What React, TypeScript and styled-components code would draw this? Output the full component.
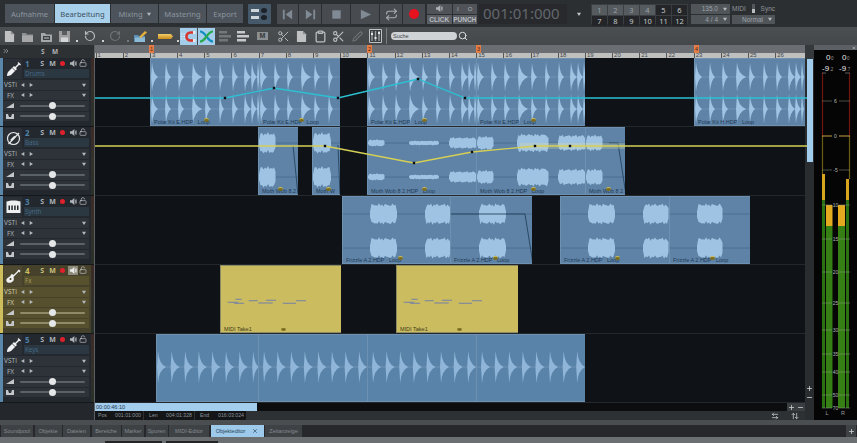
import styled, { createGlobalStyle } from "styled-components";
import {
  RotateCcw,
  RotateCw,
  Scissors,
  Clipboard,
  Pen,
  Search,
  Repeat,
  LockOpen,
  Plus,
  Minus,
  X,
  ChevronsRight,
  ArrowLeftRight,
  ArrowUpDown,
} from "lucide-react";

const GlobalStyle = createGlobalStyle`
  html, body { margin: 0; padding: 0; background: #2b2e31; }
  body { font-family: "Noto Sans", "Liberation Sans", sans-serif; }
`;

const small = `"Liberation Sans", Arial, sans-serif`;

/* ---------- data ---------- */

type Part = { x: number; w: number; label: string; icon?: number };
type Block = [number, number, number];

const polar = "Polar Kit E.HDP   Loop";
const wob = "Moth Wob 8 2.HDP   Loop";
const friz = "Frizzle A 2.HDP   Loop";

const drumParts: Part[] = [
  { x: 150, w: 109, label: polar, icon: 53 },
  { x: 259, w: 81, label: polar, icon: 39 },
  { x: 367, w: 109, label: polar, icon: 54 },
  { x: 476, w: 109, label: polar, icon: 54 },
  { x: 694, w: 111, label: "Polar Kit H.HDP   Loop" },
];

const wobParts: Part[] = [
  { x: 258, w: 40, label: "Moth Wob 8.2", icon: 19 },
  { x: 312, w: 28, label: "Moth W", icon: 13 },
  { x: 367, w: 109, label: wob, icon: 54 },
  { x: 476, w: 109, label: wob, icon: 54 },
  { x: 585, w: 40, label: "Moth Wob 8 2.", icon: 20 },
];
const wobBlocks: Block[] = [
  [258, 275, 9],
  [312, 330, 9],
  [367, 384, 3],
  [408, 438, 2],
  [448, 476, 5],
  [476, 493, 6],
  [516, 548, 8],
  [557, 585, 7],
  [585, 602, 7],
];

const frizParts: Part[] = [
  { x: 342, w: 108, label: friz, icon: 55 },
  { x: 450, w: 82, label: friz, icon: 42 },
  { x: 560, w: 109, label: friz, icon: 54 },
  { x: 669, w: 81, label: friz, icon: 40 },
];
const frizBlocks: Block[] = [
  [369, 396, 9],
  [424, 450, 9],
  [478, 505, 9],
  [587, 614, 9],
  [642, 668, 9],
  [696, 722, 9],
];

const midiParts: Part[] = [
  { x: 220, w: 121, label: "MIDI Take1", icon: 60 },
  { x: 396, w: 122, label: "MIDI Take1", icon: 60 },
];
const midiNotes = [
  [6.7, 17.3, 36.3],
  [13, 23, 37.3],
  [14.3, 20.7, 33.3],
  [27.7, 36.7, 34.7],
  [37.3, 51.7, 37],
  [45, 55, 34.3],
  [61.7, 75, 37.3],
  [75, 85, 34.7],
];

const keyParts: Part[] = [
  { x: 156, w: 102, label: "" },
  { x: 258, w: 109, label: "" },
  { x: 367, w: 109, label: "" },
  { x: 476, w: 109, label: "" },
];

const drumHits: [number, number, number][] = [
  [0, 7, 15],
  [14, 6, 15],
  [27, 6, 15],
  [41, 10, 15],
  [54, 6, 14],
  [68, 5, 15],
  [81, 6, 15],
  [93, 7, 15],
  [100, 6, 15],
  [106, 3, 15],
];

/* ---------- waveform paths ---------- */

const drumPath = (w: number, cy: number) =>
  drumHits
    .filter((h) => h[0] < w)
    .map(([o, len, a]) => {
      const end = Math.min(o + len, w);
      return `M${o} ${cy}L${o + 1} ${cy - a}Q${o + 1.8} ${cy - a * 0.22} ${end} ${cy}Q${o + 1.8} ${cy + a * 0.22} ${o + 1} ${cy + a}Z`;
    })
    .join("");

const keysPath = (w: number, cy: number, start: number) => {
  let d = "";
  for (let o = start; o < w; o += 13.6) {
    const end = Math.min(o + 9, w);
    d += `M${o} ${cy}L${o + 1} ${cy - 16}Q${o + 2} ${cy - 3} ${end} ${cy}Q${o + 2} ${cy + 3} ${o + 1} ${cy + 16}Z`;
  }
  return d;
};

const blockPath = (x0: number, x1: number, cy: number, a: number) => {
  const top: string[] = [];
  const bot: string[] = [];
  for (let x = x0; x <= x1; x += 1.5) {
    const t = Math.min(1, (x - x0) / 2 + 0.3, (x1 - x) / 2 + 0.3);
    const n = 1 + 0.13 * Math.sin(x * 2.3) + 0.09 * Math.sin(x * 5.1);
    top.push(`${x} ${cy - a * t * n}`);
    bot.unshift(`${x} ${cy + a * t * (2 - n)}`);
  }
  return `M${top.join("L")}L${bot.join("L")}Z`;
};

/* ---------- icons ---------- */

const DocIcon = () => (
  <svg width="11" height="13" viewBox="0 0 12 14">
    <path d="M1 1h6.5L11 4.500V13H1z" fill="#bfc1c2" />
    <path d="M7.500 1v3.500H11" fill="#8d9093" />
  </svg>
);
const FolderIcon = () => (
  <svg width="13" height="13" viewBox="0 0 13 13">
    <path d="M1 3h4l1 1.500h6V12H1z" fill="#8c8f92" />
    <path d="M1 5.500h11V12H1z" fill="#a5a7a9" />
  </svg>
);
const FolderBox = () => (
  <svg width="13" height="13" viewBox="0 0 13 13">
    <path d="M1 3h4l1 1.500h6V12H1z" fill="#a5a8aa" />
    <path d="M3 6h7v4H3z" fill="#3b3e41" />
    <path d="M4 7.500h5v1H4z" fill="#c9cbcc" />
  </svg>
);
const SaveIcon = () => (
  <svg width="13" height="13" viewBox="0 0 13 13">
    <path d="M1 1h11v11H1z" fill="#9c9ea0" />
    <path d="M4 1h5v4H4z" fill="#5a5d60" />
    <path d="M3 7.500h7V12H3z" fill="#d4d5d6" />
  </svg>
);
const FolderPen = () => (
  <svg width="15" height="13" viewBox="0 0 15 13">
    <path d="M1 5h4l1 1h6v6H1z" fill="#5b8fb5" />
    <path d="M2 7.500h10V12H2z" fill="#8cbbd8" />
    <path d="M6 7l6-6 2 1.500-6 5.500z" fill="#e5b13c" />
  </svg>
);
const RulerIcon = () => (
  <svg width="15" height="7" viewBox="0 0 15 7">
    <defs>
      <linearGradient id="rulerFill" x1="0" x2="0" y1="0" y2="1">
        <stop offset="0" stopColor="#f2cf6a" />
        <stop offset="1" stopColor="#c98a1d" />
      </linearGradient>
    </defs>
    <path d="M0 1h13l2 2.500-2 2.500H0z" fill="url(#rulerFill)" />
  </svg>
);
const MagnetIcon = () => (
  <svg width="16" height="13" viewBox="0 0 16 13">
    <path d="M0 4h7M0 6.500h6M0 9h7" stroke="#f0f4f6" strokeWidth="0.8" strokeDasharray="1.500 1" />
    <path d="M14 2.500H9.500a4 4 0 0 0 0 8H14" fill="none" stroke="#d9352f" strokeWidth="2.600" />
    <path d="M12 1h2.500v3H12zM12 9h2.500v3H12z" fill="#e8e8e8" />
  </svg>
);
const CrossIcon = () => (
  <svg width="15" height="13" viewBox="0 0 15 13">
    <path d="M1 1.500C7 1.500 8 11.500 14 11.500" fill="none" stroke="#0f8fc0" strokeWidth="2.200" />
    <path d="M1 11.500C7 11.500 8 1.500 14 1.500" fill="none" stroke="#27a84a" strokeWidth="2.200" />
  </svg>
);
const ListIcon = ({ $dim }: { $dim?: boolean }) => (
  <svg width="14" height="11" viewBox="0 0 14 11" opacity={$dim ? 0.35 : 1}>
    <path d="M1 0h8v2.500H1zM1 4h12v2.500H1zM1 8h9v2.500H1z" fill="#c6c8ca" />
  </svg>
);
const MixerIcon = () => (
  <svg width="13" height="14" viewBox="0 0 13 14">
    <path d="M.5.500h12v13H.5z" fill="#3b3e41" stroke="#bfc1c3" />
    <path d="M3 2v10M6.500 2v10M10 2v10" stroke="#9a9c9f" strokeWidth="1.400" />
    <path d="M2 4h2v2H2zM5.500 8h2v2h-2zM9 3h2v2H9z" fill="#e6e7e8" />
  </svg>
);
const SpeakerIcon = ({ $c = "#aeb2b6" }: { $c?: string }) => (
  <svg width="7" height="7" viewBox="0 0 8 8">
    <path d="M0 2.500h2L5 0v8L2 5.500H0zM6 2l1.500-.5v5L6 6z" fill={$c} />
  </svg>
);
const Tri = ({ dir, c = "#b4b9bd", s = 4 }: { dir: "l" | "r" | "d"; c?: string; s?: number }) => (
  <svg width={s} height={s} viewBox="0 0 6 6">
    <path d={dir === "l" ? "M5 0v6L0 3z" : dir === "r" ? "M1 0v6l5-3z" : "M0 1h6L3 6z"} fill={c} />
  </svg>
);
const TransportIcon = ({ kind }: { kind: "prev" | "next" | "stop" | "play" }) => (
  <svg width="13" height="13" viewBox="0 0 14 14">
    {kind === "prev" && <path d="M2 2h2v10H2zM12 2v10L5 7z" fill="#808a94" />}
    {kind === "next" && <path d="M10 2h2v10h-2zM2 2v10l7-5z" fill="#808a94" />}
    {kind === "stop" && <path d="M2.500 2.500h9v9h-9z" fill="#808a94" />}
    {kind === "play" && <path d="M2 2v10l11-5z" fill="#808a94" />}
  </svg>
);
const TrumpetIcon = () => (
  <svg width="15" height="15" viewBox="0 0 15 15">
    <path d="M1 14c0-3 1-4.500 3-6l4-4 3 3-4 4c-1.500 2-3 3-6 3z" fill="#f1f2f3" />
    <path d="M9 6l4.500-4.500" stroke="#f1f2f3" strokeWidth="1.400" />
    <path d="M6 5.500l4 4" stroke="#262a2e" strokeWidth=".7" />
    <path d="M12 .5l2.500 2.500" stroke="#f1f2f3" strokeWidth="1.200" />
  </svg>
);
const BassIcon = () => (
  <svg width="15" height="15" viewBox="0 0 15 15">
    <circle cx="7.500" cy="7.500" r="6" fill="none" stroke="#e6e8e9" strokeWidth="1.200" />
    <path d="M2.500 13L13 2" stroke="#e6e8e9" strokeWidth="1.200" />
    <path d="M5 9.500l4-4" stroke="#e6e8e9" strokeWidth="2" />
  </svg>
);
const KeysIcon = () => (
  <svg width="15" height="14" viewBox="0 0 15 14">
    <path d="M.5 1.500C4 0 11 0 14.500 1.500V13H.5z" fill="#eeeff0" />
    <path d="M2.500 5.500h1.500V10H2.500zM5.300 5.500h1.500V10H5.300zM8.200 5.500h1.500V10H8.200zM11 5.500h1.500V10H11z" fill="#22262a" />
  </svg>
);
const GuitarIcon = () => (
  <svg width="15" height="15" viewBox="0 0 15 15">
    <path d="M5 5.500c1.500-.5 2.500 0 3 1L7 7.500c1 1 1 3 .5 4C6 14 2.500 14.500 1 13S.5 9 3 8c1-.5 1.500-1 2-2.500z" fill="#f1f2f3" />
    <path d="M6.500 8L12.500 2" stroke="#f1f2f3" strokeWidth="1.300" />
    <path d="M11.500 1.500l2 2 1-1.500-1.500-1.500z" fill="#f1f2f3" />
    <circle cx="4.500" cy="10" r="1" fill="#4b4528" />
  </svg>
);

/* ---------- shell ---------- */

const Frame = styled.div`
  width: 857px;
  height: 443px;
  overflow: hidden;
  display: flex;
  flex-direction: column;
  background: #2b2e31;
  color: #9aa2a9;
`;

/* top bar */

const TopBar = styled.div`
  height: 27px;
  flex: none;
  display: flex;
  align-items: flex-start;
  padding: 4px 0 0 5px;
  box-sizing: border-box;
  background: #2c2f32;
`;
const ModeTabs = styled.div`
  display: flex;
  height: 19px;
  gap: 1px;
  flex: none;
`;
const ModeTab = styled.div<{ $w: number; $active?: boolean }>`
  width: ${(p) => p.$w}px;
  display: flex;
  align-items: center;
  justify-content: center;
  gap: 4px;
  font-size: 7.6px;
  background: ${(p) => (p.$active ? "#a9d0ea" : "#4d535a")};
  color: ${(p) => (p.$active ? "#3a5062" : "#8b96a0")};
`;
const ViewButton = styled.div`
  width: 23px;
  height: 20px;
  margin-left: 5px;
  flex: none;
  padding: 3px 2px;
  box-sizing: border-box;
  background: #45596b;
  display: grid;
  grid-template-columns: 1fr 1fr;
  place-items: center;
  border-radius: 1px;
`;
const ViewDot = styled.span<{ $round?: boolean }>`
  width: ${(p) => (p.$round ? 6 : 8)}px;
  height: ${(p) => (p.$round ? 5 : 3)}px;
  background: ${(p) => (p.$round ? "#1c2227" : "#cfd4d8")};
  border-radius: ${(p) => (p.$round ? "50%" : "0")};
`;
const Transport = styled.div`
  display: flex;
  height: 20px;
  margin-left: 6px;
  gap: 1px;
  flex: none;
`;
const TransportButton = styled.div<{ $w: number }>`
  width: ${(p) => p.$w}px;
  display: flex;
  align-items: center;
  justify-content: center;
  background: #484c51;
`;
const RecordDot = styled.span`
  width: 10px;
  height: 10px;
  border-radius: 50%;
  background: #e8121f;
`;
const PunchGroup = styled.div`
  width: 50px;
  height: 20px;
  margin-left: 2px;
  flex: none;
  display: grid;
  grid-template-columns: 1fr 1fr;
  grid-template-rows: 1fr 1fr;
  gap: 1px;
`;
const PunchTop = styled.div`
  background: #505459;
  display: flex;
  align-items: center;
  justify-content: space-around;
  font-family: ${small};
  font-size: 6px;
  color: #b0b4b8;
`;
const PunchLabel = styled.div`
  background: #5b5f64;
  display: flex;
  align-items: center;
  justify-content: center;
  font-family: ${small};
  font-size: 6.5px;
  font-weight: 700;
  color: #b8bcc0;
`;
const TimeDisplay = styled.div`
  width: 88px;
  height: 20px;
  margin-left: 2px;
  flex: none;
  box-sizing: border-box;
  padding-left: 4px;
  background: #28292c;
  color: #62676d;
  font-size: 15px;
  line-height: 19px;
`;
const TimeMenu = styled.div`
  width: 24px;
  height: 20px;
  display: flex;
  align-items: center;
  justify-content: center;
  flex: none;
`;
const NumGrid = styled.div`
  width: 97px;
  height: 20px;
  flex: none;
  box-sizing: border-box;
  padding: 1px;
  background: #3c3f42;
  display: grid;
  grid-template-columns: repeat(6, 1fr);
  grid-template-rows: 1fr 1fr;
  gap: 1px;
`;
const NumCell = styled.div<{ $lit?: boolean }>`
  display: flex;
  align-items: center;
  justify-content: center;
  font-size: 7.5px;
  background: ${(p) => (p.$lit ? "#565b60" : "#232528")};
  color: ${(p) => (p.$lit ? "#9aa0a6" : "#c6c9cb")};
`;
const TempoGroup = styled.div`
  width: 84px;
  height: 20px;
  margin-left: 3px;
  flex: none;
  display: grid;
  grid-template-columns: 39px 1fr;
  grid-template-rows: 1fr 1fr;
  gap: 1px 2px;
`;
const TempoField = styled.div`
  background: #50555a;
  display: flex;
  align-items: center;
  justify-content: flex-end;
  gap: 5px;
  padding-right: 3px;
  font-family: ${small};
  font-size: 6.5px;
  color: #9ea4a9;
`;
const MidiSync = styled.div`
  display: flex;
  align-items: center;
  justify-content: space-between;
  font-family: ${small};
  font-size: 6.5px;
  color: #8f959a;
`;
const SyncKnob = styled.span`
  width: 3px;
  height: 9px;
  background: linear-gradient(#55595d 60%, #b8bcbf 60%);
`;

/* tool bar */

const ToolBar = styled.div`
  height: 18px;
  flex: none;
  display: flex;
  align-items: center;
  background: linear-gradient(#4c4f52, #45484b);
  color: #b9bbbd;
`;
const ToolButton = styled.div<{ $w: number; $active?: boolean; $dim?: boolean }>`
  width: ${(p) => p.$w}px;
  height: 17px;
  flex: none;
  display: flex;
  align-items: center;
  justify-content: center;
  background: ${(p) => (p.$active ? "#a3cde8" : "transparent")};
  opacity: ${(p) => (p.$dim ? 0.35 : 1)};
`;
const ToolMenu = styled(ToolButton)`
  align-items: flex-end;
  padding-bottom: 3px;
  box-sizing: border-box;
`;
const MiniDot = styled.span`
  width: 2px;
  height: 2px;
  background: #d0d2d4;
`;
const MBox = styled.span`
  background: #8d9093;
  color: #34373a;
  font-family: ${small};
  font-size: 7px;
  font-weight: 700;
  line-height: 8px;
  padding: 0 3px;
`;
const ToolSep = styled.span`
  width: 1px;
  height: 16px;
  margin: 0 4px 0 2px;
  background: #7a7d80;
`;
const SearchField = styled.div`
  width: 66px;
  height: 8px;
  flex: none;
  box-sizing: border-box;
  padding-left: 2px;
  border-radius: 4px;
  background: #cfd3d6;
  color: #44484c;
  font-family: ${small};
  font-size: 5.5px;
  line-height: 8px;
`;

/* workspace */

const Workspace = styled.div`
  height: 375px;
  flex: none;
  display: flex;
`;

const LeftPanel = styled.div`
  width: 95px;
  flex: none;
  background: #24282c;
  border-right: 1px solid #5c6063;
  box-sizing: border-box;
`;
const ListHeader = styled.div`
  height: 13px;
  display: flex;
  align-items: center;
  padding-left: 2px;
  background: #2e3134;
  font-size: 6.5px;
  font-weight: 700;
  color: #aeb2b6;
`;
const HeaderSolo = styled.span<{ $w: number }>`
  width: ${(p) => p.$w}px;
  flex: none;
`;
const TrackRow = styled.div<{ $tone: string }>`
  height: 69px;
  box-sizing: border-box;
  display: flex;
  background: ${(p) => (p.$tone === "olive" ? "#46412a" : "#22282e")};
  border-bottom: 1px solid #15181a;
`;
const TrackStrip = styled.div<{ $tone: string }>`
  width: 2.5px;
  flex: none;
  background: ${(p) => (p.$tone === "olive" ? "#cdbd5c" : "#5a87aa")};
`;
const TrackBody = styled.div`
  width: 86px;
  flex: none;
  padding-left: 0.5px;
  box-sizing: border-box;
  display: flex;
  flex-direction: column;
`;
const TrackHead = styled.div`
  height: 21px;
  display: flex;
  gap: 2px;
  flex: none;
`;
const IconBox = styled.div<{ $tone: string }>`
  width: 18px;
  height: 20px;
  margin: 1px 0 0 1px;
  flex: none;
  display: flex;
  align-items: center;
  justify-content: center;
  background: ${(p) => (p.$tone === "olive" ? "#4e4930" : "#2a3035")};
`;
const HeadCol = styled.div`
  flex: 1;
  display: flex;
  flex-direction: column;
`;
const HeadTop = styled.div<{ $tone: string }>`
  height: 10px;
  display: flex;
  align-items: center;
  font-size: 7px;
  font-weight: 700;
  color: ${(p) => (p.$tone === "olive" ? "#c9c07e" : "#aeb2b6")};
`;
const TrackNum = styled.span<{ $tone: string }>`
  width: 13px;
  padding-left: 1px;
  box-sizing: border-box;
  color: ${(p) => (p.$tone === "olive" ? "#cbbf62" : "#4f7fa5")};
  font-size: 8px;
`;
const HeadKey = styled.span<{ $active?: boolean }>`
  width: 10.3px;
  height: 9px;
  flex: none;
  display: flex;
  align-items: center;
  justify-content: center;
  background: ${(p) => (p.$active ? "#8c8a7a" : "transparent")};
`;
const RecDot = styled.span`
  width: 5px;
  height: 5px;
  border-radius: 50%;
  background: #e0202a;
`;
const NameField = styled.div<{ $tone: string }>`
  height: 9.5px;
  margin-top: 0.5px;
  padding-left: 1px;
  font-size: 6.2px;
  line-height: 9.5px;
  background: ${(p) => (p.$tone === "olive" ? "#57512e" : "#2b3842")};
  color: ${(p) => (p.$tone === "olive" ? "#a89c52" : "#456885")};
`;
const CtrlRow = styled.div<{ $tone: string }>`
  height: 9.5px;
  margin-top: 1px;
  flex: none;
  display: flex;
  align-items: center;
  gap: 4px;
  padding: 0 3px 0 1px;
  background: ${(p) => (p.$tone === "olive" ? "#56502f" : "#2d3338")};
  font-size: 6.5px;
  color: ${(p) => (p.$tone === "olive" ? "#cdc9a8" : "#aab0b5")};
`;
const CtrlName = styled.span`
  width: 13px;
  flex: none;
  text-align: center;
`;
const CtrlEnd = styled.span`
  margin-left: auto;
  display: flex;
`;
const FaderIcon = styled.span`
  width: 12px;
  flex: none;
  display: flex;
  justify-content: center;
`;
const FaderTrack = styled.div<{ $tone: string }>`
  flex: 1;
  height: 2px;
  margin-right: 1px;
  border-radius: 1px;
  position: relative;
  background: ${(p) => (p.$tone === "olive" ? "#8f8a68" : "#5b6267")};
`;
const FaderThumb = styled.span`
  position: absolute;
  left: 50%;
  top: -2.500px;
  width: 7px;
  height: 7px;
  margin-left: -3.500px;
  border-radius: 50%;
  background: #e4e6e7;
`;
const ChannelMeter = styled.div<{ $tone: string }>`
  width: 3.5px;
  margin-left: auto;
  flex: none;
  background: linear-gradient(#3d2a26, #33302a 50%, #283028);
`;

/* timeline */

const Center = styled.div`
  width: 719px;
  flex: none;
  display: flex;
`;
const Timeline = styled.div`
  width: 710px;
  flex: none;
  display: flex;
  flex-direction: column;
`;
const Ruler = styled.div`
  height: 13px;
  flex: none;
  position: relative;
  background: linear-gradient(#6a6e72 0 8px, #bfbfbd 8px);
`;
const RulerBars = styled.div`
  display: flex;
  height: 5px;
  padding-left: 0.5px;
  position: absolute;
  top: 8px;
  left: 0;
`;
const RulerBar = styled.span`
  width: 27.2px;
  flex: none;
  box-sizing: border-box;
  border-left: 1px solid #55585b;
  height: 5px;
  padding-left: 1px;
  font-family: ${small};
  font-size: 6px;
  line-height: 5px;
  color: #44484c;
`;
const Flag = styled.span`
  position: absolute;
  top: 0;
  width: 5px;
  height: 8px;
  background: #e37c46;
  color: #4b2412;
  font-family: ${small};
  font-size: 5.5px;
  line-height: 8px;
  text-align: center;
`;
const Lanes = styled.div`
  height: 345px;
  flex: none;
  position: relative;
  background: #0f1317;
`;
const Lane = styled.div`
  height: 69px;
  box-sizing: border-box;
  position: relative;
  border-bottom: 1px solid #23282c;
`;
const Clip = styled.div<{ $tone: string }>`
  position: absolute;
  top: 0;
  bottom: 0;
  box-sizing: border-box;
  overflow: hidden;
  background: ${(p) =>
    p.$tone === "midi" ? "#cbbc5f" : p.$tone === "keys" ? "#5a83a9" : "#5e83a7"};
  border: 1px solid ${(p) => (p.$tone === "midi" ? "#8d8b63" : "#6f91b1")};
  border-width: 1px 0 1px 1px;
  color: ${(p) => (p.$tone === "midi" ? "#3e3b1a" : "#1f3a55")};
`;
const ClipWave = styled.svg`
  display: block;
`;
const ClipLabel = styled.span`
  position: absolute;
  left: 3px;
  bottom: 0;
  font-family: ${small};
  font-size: 5.5px;
  line-height: 6px;
  white-space: pre;
`;
const LoopMark = styled.span<{ $top: number }>`
  position: absolute;
  top: ${(p) => p.$top}px;
  width: 5px;
  height: 3px;
  border-radius: 50%;
  background: #7d6f1f;
  border-top: 1px solid #cfc05a;
`;
const Overlay = styled.svg`
  position: absolute;
  top: 0;
  left: 0;
  pointer-events: none;
`;
const ScrollRow = styled.div`
  height: 8px;
  flex: none;
  display: flex;
  background: #0b0d0f;
  font-family: ${small};
  font-size: 5.5px;
`;
const ScrollThumb = styled.div`
  width: 162px;
  background: #a3cdec;
  color: #1f3a55;
  padding-left: 1px;
  line-height: 8px;
  box-sizing: border-box;
`;
const ScrollEnd = styled.div`
  margin-left: auto;
  width: 18px;
  background: #3b3e41;
  display: flex;
  align-items: center;
  justify-content: space-around;
  color: #c2c5c7;
`;
const PosRow = styled.div`
  height: 9px;
  flex: none;
  display: flex;
  align-items: center;
  background: #2e3134;
  font-family: ${small};
  font-size: 5.2px;
  color: #8d9297;
`;
const PosCell = styled.span<{ $w: number; $pad?: number }>`
  width: ${(p) => p.$w}px;
  height: 9px;
  line-height: 9px;
  flex: none;
  display: flex;
  justify-content: space-between;
  white-space: nowrap;
  padding: 0 2px 0 ${(p) => p.$pad ?? 3}px;
  box-sizing: border-box;
  background: #131517;
  margin-right: 1px;
`;
const PosIcons = styled.div`
  margin-left: auto;
  width: 40px;
  display: flex;
  justify-content: space-around;
  color: #c2c5c7;
`;
const VScroll = styled.div`
  width: 9px;
  flex: none;
  display: flex;
  flex-direction: column;
  align-items: center;
  background: #2a2d30;
  color: #c2c5c7;
`;
const VCap = styled.div`
  height: 14px;
  width: 100%;
  background: #36393c;
  flex: none;
`;
const VThumb = styled.div`
  width: 6px;
  height: 103px;
  margin-left: 1px;
  flex: none;
  background: #a3cdec;
`;
const VButtons = styled.div`
  margin-top: auto;
  margin-bottom: 19px;
  display: flex;
  flex-direction: column;
  gap: 2px;
`;

/* meter */

const MeterPanel = styled.div`
  width: 43px;
  flex: none;
  background: #050505;
`;
const MeterCap = styled.div`
  height: 5px;
  background: #5c6064;
  color: #d0d2d4;
  display: flex;
  justify-content: flex-end;
  align-items: center;
  padding-right: 1px;
`;
const MeterSvg = styled.svg`
  display: block;
`;

/* bottom */

const Strip = styled.div`
  height: 5px;
  flex: none;
  background: #4b4e51;
`;
const TabBar = styled.div`
  height: 12px;
  flex: none;
  display: flex;
  gap: 1.500px;
  padding-left: 1px;
  background: #26282b;
  color: #c5c7c9;
`;
const BottomTab = styled.div<{ $w: number; $active?: boolean }>`
  width: ${(p) => p.$w}px;
  flex: none;
  display: flex;
  align-items: center;
  justify-content: center;
  gap: 7px;
  font-family: ${small};
  font-size: 5.5px;
  background: ${(p) => (p.$active ? "#9dcaea" : "#3f4245")};
  color: ${(p) => (p.$active ? "#2b4257" : "#858b90")};
`;
const TabAdd = styled.div`
  margin-left: auto;
  margin-right: 1px;
  width: 10px;
  display: flex;
  align-items: center;
  justify-content: center;
  background: #3f4245;
`;
const Footer = styled.div`
  flex: 1;
  display: flex;
  gap: 4px;
  padding-left: 105px;
  background: #6c6f72;
`;
const FooterSlot = styled.span<{ $w: number }>`
  width: ${(p) => p.$w}px;
  height: 2px;
  margin-top: 4px;
  background: #222426;
`;

/* ---------- parts ---------- */

const strokeIcon = { size: 12, strokeWidth: 2.4 };

const TrackHeader = ({ num, name, tone, icon, solo }: { num: number; name: string; tone: string; icon: React.ReactNode; solo?: boolean }) => (
  <TrackRow $tone={tone}>
    <TrackStrip $tone={tone} />
    <TrackBody>
      <TrackHead>
        <IconBox $tone={tone}>{icon}</IconBox>
        <HeadCol>
          <HeadTop $tone={tone}>
            <TrackNum $tone={tone}>{num}</TrackNum>
            <HeadKey>S</HeadKey>
            <HeadKey>M</HeadKey>
            <HeadKey>
              <RecDot />
            </HeadKey>
            <HeadKey $active={solo}>
              <SpeakerIcon $c={solo ? "#ececec" : "#aeb2b6"} />
            </HeadKey>
            <HeadKey>
              <LockOpen size={8} strokeWidth={2} color="#c4c7ca" />
            </HeadKey>
          </HeadTop>
          <NameField $tone={tone}>{name}</NameField>
        </HeadCol>
      </TrackHead>
      {["VSTi", "FX"].map((c) => (
        <CtrlRow key={c} $tone={tone}>
          <CtrlName>{c}</CtrlName>
          <Tri dir="l" />
          <Tri dir="r" />
          <CtrlEnd>
            <Tri dir="d" />
          </CtrlEnd>
        </CtrlRow>
      ))}
      {[0, 1].map((i) => (
        <CtrlRow key={i} $tone={tone}>
          <FaderIcon>
            <svg width="8" height="5" viewBox="0 0 8 5">
              <path d={i === 0 ? "M0 5L8 0v5z" : "M0 0h2l1 3h2l1-3h2v5H0z"} fill="#c3c7ca" />
            </svg>
          </FaderIcon>
          <FaderTrack $tone={tone}>
            <FaderThumb />
          </FaderTrack>
        </CtrlRow>
      ))}
    </TrackBody>
    <ChannelMeter $tone={tone} />
  </TrackRow>
);

const DrumPart = ({ p }: { p: Part }) => (
  <Clip $tone="audio" style={{ left: p.x - 95, width: p.w }}>
    <ClipWave width={p.w} height={67}>
      <path d={`M0 18H${p.w}M0 50H${p.w}`} stroke="#6f92b3" strokeWidth="1" />
      <path d={drumPath(p.w, 18) + drumPath(p.w, 50)} fill="#9fc3e2" />
    </ClipWave>
    <ClipLabel>{p.label}</ClipLabel>
    {p.icon && <LoopMark $top={59} style={{ left: p.icon }} />}
  </Clip>
);

const BlockPart = ({ p, blocks, c1, c2, fade }: { p: Part; blocks: Block[]; c1: number; c2: number; fade?: string }) => {
  const inside = blocks.filter((b) => b[0] >= p.x && b[1] <= p.x + p.w);
  const d = inside
    .map(([a, b, amp]) => blockPath(a - p.x, b - p.x, c1, amp) + blockPath(a - p.x, b - p.x, c2, amp))
    .join("");
  return (
    <Clip $tone="audio" style={{ left: p.x - 95, width: p.w }}>
      <ClipWave width={p.w} height={67}>
        <path d={`M0 ${c1}H${p.w}M0 ${c2}H${p.w}`} stroke="#47698a" strokeWidth="0.8" />
        <path d={d} fill="#9fc3e2" />
        {fade && <path d={fade} fill="none" stroke="#26435e" strokeWidth="0.9" />}
      </ClipWave>
      <ClipLabel>{p.label}</ClipLabel>
      {p.icon && <LoopMark $top={59} style={{ left: p.icon }} />}
    </Clip>
  );
};

const MidiPart = ({ p }: { p: Part }) => (
  <Clip $tone="midi" style={{ left: p.x - 95, width: p.w }}>
    <ClipWave width={p.w} height={67}>
      {midiNotes.map(([a, b, y], i) => (
        <path key={i} d={`M${a} ${y}H${b}`} stroke="#7d86a0" strokeWidth="1.100" />
      ))}
    </ClipWave>
    <ClipLabel>{p.label}</ClipLabel>
    {p.icon && <LoopMark $top={61} style={{ left: p.icon }} />}
  </Clip>
);

const KeyPart = ({ p, i }: { p: Part; i: number }) => (
  <Clip $tone="keys" style={{ left: p.x - 95, width: p.w }}>
    <ClipWave width={p.w} height={67}>
      <path d={`M0 32H${p.w}`} stroke="#6f92b3" strokeWidth="1" />
      <path d={keysPath(p.w, 32, i === 0 ? 0 : 4)} fill="#8fb6d9" />
    </ClipWave>
  </Clip>
);

const Node = ({ x, y }: { x: number; y: number }) => <rect x={x - 1.2} y={y - 1.2} width="2.400" height="2.400" fill="#0b0e10" />;

const cyanPts: [number, number][] = [[130, 40], [179, 30], [243, 40], [323, 21], [370, 40]];
const yellowPts: [number, number][] = [[230, 88], [319, 105], [377, 94], [440, 88], [475, 88]];

const meterScale: [string, number][] = [
  ["6", 101],
  ["0", 136],
  ["-5", 170],
  ["10", 205],
  ["15", 239],
  ["20", 272],
  ["25", 303],
  ["30", 330],
  ["35", 354],
  ["40", 372],
  ["50", 395],
  ["70", 408],
];

const Meter = () => {
  const mx = (x: number) => x - 814;
  const my = (y: number) => y - 50;
  return (
    <MeterSvg width="43" height="370" viewBox="0 0 43 370">
      <g fontFamily="Liberation Sans, sans-serif" fill="#e8e8e8">
        <text x="12" y="10" fontSize="8">0</text>
        <text x="17" y="10" fontSize="4.500" fill="#999">0</text>
        <text x="28" y="10" fontSize="8">0</text>
        <text x="33" y="10" fontSize="4.500" fill="#999">0</text>
        <text x="8" y="21" fontSize="8">-9</text>
        <text x="15.500" y="21" fontSize="4.500" fill="#999">.2</text>
        <text x="25" y="21" fontSize="8">-9</text>
        <text x="32.500" y="21" fontSize="4.500" fill="#999">.7</text>
      </g>
      {/* outer rails */}
      <path d={`M${mx(822.5)} ${my(73)}V${my(136)}M${mx(849.5)} ${my(73)}V${my(136)}`} stroke="#6e1712" strokeWidth="1.200" />
      <path d={`M${mx(822.5)} ${my(136)}V${my(174)}M${mx(849.5)} ${my(136)}V${my(179)}`} stroke="#6b5c14" strokeWidth="1.200" />
      <path d={`M${mx(822)} ${my(73)}H${mx(826)}M${mx(845)} ${my(73)}H${mx(850)}`} stroke="#76706a" strokeWidth="0.8" />
      <rect x={mx(822)} y={my(174)} width="3" height="26" fill="#d9a51f" />
      <rect x={mx(846)} y={my(179)} width="3" height="21" fill="#d9a51f" />
      <rect x={mx(822)} y={my(200)} width="3" height="208" fill="#2b7112" />
      <rect x={mx(846)} y={my(200)} width="3" height="208" fill="#2b7112" />
      {/* inner bars */}
      <rect x={mx(826)} y={my(205)} width="6.500" height="21" fill="#e3a91f" />
      <rect x={mx(838)} y={my(205)} width="7" height="21" fill="#e3a91f" />
      <rect x={mx(826)} y={my(226)} width="6.500" height="182" fill="#357f14" />
      <rect x={mx(838)} y={my(226)} width="7" height="182" fill="#357f14" />
      {/* scale */}
      {meterScale.map(([label, y]) => (
        <g key={label}>
          <path d={`M${mx(822)} ${my(y)}H${mx(832)}M${mx(839)} ${my(y)}H${mx(850)}`} stroke={label === "0" ? "#c9a23c" : "#8f9a84"} strokeWidth={label === "0" ? 1 : 0.5} />
          <text x={mx(835.5)} y={my(y) + 2} fontSize="5" textAnchor="middle" fontFamily="Liberation Sans, sans-serif" fill="#b4b8b4">
            {label}
          </text>
        </g>
      ))}
      <text x={mx(827)} y={my(415)} fontSize="5.500" textAnchor="middle" fontFamily="Liberation Sans, sans-serif" fill="#9a9ea2">L</text>
      <text x={mx(843)} y={my(415)} fontSize="5.500" textAnchor="middle" fontFamily="Liberation Sans, sans-serif" fill="#9a9ea2">R</text>
    </MeterSvg>
  );
};

const bars = Array.from({ length: 26 }, (_, i) => i + 1);
const flags: [string, number][] = [["1", 54], ["2", 272], ["3", 381], ["4", 599]];
const tabs: [string, number][] = [
  ["Soundpool", 32],
  ["Objekte", 27],
  ["Dateien", 27],
  ["Bereiche", 29],
  ["Marker", 22],
  ["Spuren", 22],
  ["MIDI-Editor", 40],
];

export default function App() {
  return (
    <Frame>
      <GlobalStyle />
      <TopBar>
        <ModeTabs>
          <ModeTab $w={49}>Aufnahme</ModeTab>
          <ModeTab $w={55} $active>Bearbeitung</ModeTab>
          <ModeTab $w={47}>
            Mixing
            <Tri dir="d" s={4} />
          </ModeTab>
          <ModeTab $w={47}>Mastering</ModeTab>
          <ModeTab $w={36}>Export</ModeTab>
        </ModeTabs>
        <ViewButton>
          <ViewDot />
          <ViewDot $round />
          <ViewDot />
          <ViewDot $round />
        </ViewButton>
        <Transport>
          <TransportButton $w={21}><TransportIcon kind="prev" /></TransportButton>
          <TransportButton $w={22}><TransportIcon kind="next" /></TransportButton>
          <TransportButton $w={28}><TransportIcon kind="stop" /></TransportButton>
          <TransportButton $w={28}><TransportIcon kind="play" /></TransportButton>
          <TransportButton $w={22}><Repeat size={13} color="#a7acb0" strokeWidth={2} /></TransportButton>
          <TransportButton $w={22}><RecordDot /></TransportButton>
        </Transport>
        <PunchGroup>
          <PunchTop><SpeakerIcon /></PunchTop>
          <PunchTop>
            <span>I</span>
            <span>O</span>
          </PunchTop>
          <PunchLabel>CLICK</PunchLabel>
          <PunchLabel>PUNCH</PunchLabel>
        </PunchGroup>
        <TimeDisplay>001:01:000</TimeDisplay>
        <TimeMenu><Tri dir="d" s={4} c="#c3c6c9" /></TimeMenu>
        <NumGrid>
          {Array.from({ length: 12 }, (_, i) => (
            <NumCell key={i} $lit={i < 4}>{i + 1}</NumCell>
          ))}
        </NumGrid>
        <TempoGroup>
          <TempoField>135.0 <Tri dir="d" s={4} /></TempoField>
          <MidiSync>MIDI <SyncKnob /> Sync</MidiSync>
          <TempoField>4 / 4 <Tri dir="d" s={4} /></TempoField>
          <TempoField>Normal <Tri dir="d" s={4} /></TempoField>
        </TempoGroup>
      </TopBar>

      <ToolBar>
        <ToolButton $w={18}><DocIcon /></ToolButton>
        <ToolButton $w={19}><FolderIcon /></ToolButton>
        <ToolButton $w={18}><FolderBox /></ToolButton>
        <ToolButton $w={18}><SaveIcon /></ToolButton>
        <ToolMenu $w={8}><MiniDot /></ToolMenu>
        <ToolButton $w={18}><RotateCcw {...strokeIcon} /></ToolButton>
        <ToolMenu $w={7}><MiniDot /></ToolMenu>
        <ToolButton $w={18} $dim><RotateCw {...strokeIcon} /></ToolButton>
        <ToolMenu $w={7} $dim><MiniDot /></ToolMenu>
        <ToolButton $w={18}><FolderPen /></ToolButton>
        <ToolMenu $w={6}><MiniDot /></ToolMenu>
        <ToolButton $w={20}><RulerIcon /></ToolButton>
        <ToolMenu $w={5}><MiniDot /></ToolMenu>
        <ToolButton $w={17} $active><MagnetIcon /></ToolButton>
        <ToolButton $w={1} />
        <ToolButton $w={17} $active><CrossIcon /></ToolButton>
        <ToolButton $w={19}><ListIcon $dim /></ToolButton>
        <ToolButton $w={18}><ListIcon /></ToolButton>
        <ToolButton $w={21}><MBox>M</MBox></ToolButton>
        <ToolButton $w={20}><Scissors size={13} strokeWidth={1.8} /></ToolButton>
        <ToolButton $w={17}><DocIcon /></ToolButton>
        <ToolButton $w={20}><Clipboard size={13} strokeWidth={2.4} /></ToolButton>
        <ToolButton $w={17}><Scissors size={13} strokeWidth={2.2} /></ToolButton>
        <ToolButton $w={20} $dim><Pen size={11} strokeWidth={2.4} /></ToolButton>
        <ToolButton $w={17}><MixerIcon /></ToolButton>
        <ToolSep />
        <SearchField>Suche</SearchField>
        <ToolButton $w={12}><Search size={10} strokeWidth={2.4} color="#d9dbdd" /></ToolButton>
      </ToolBar>

      <Workspace>
        <LeftPanel>
          <ListHeader>
            <HeaderSolo $w={9}><ChevronsRight size={8} strokeWidth={2} /></HeaderSolo>
            <HeaderSolo $w={30} />
            <HeaderSolo $w={11}>S</HeaderSolo>
            <HeaderSolo $w={11}>M</HeaderSolo>
          </ListHeader>
          <TrackHeader num={1} name="Drums" tone="blue" icon={<TrumpetIcon />} />
          <TrackHeader num={2} name="Bass" tone="blue" icon={<BassIcon />} />
          <TrackHeader num={3} name="Synth" tone="blue" icon={<KeysIcon />} />
          <TrackHeader num={4} name="Fx" tone="olive" icon={<GuitarIcon />} solo />
          <TrackHeader num={5} name="Keys" tone="blue" icon={<TrumpetIcon />} />
        </LeftPanel>

        <Center>
          <Timeline>
            <Ruler>
              <RulerBars>
                {bars.map((b) => (
                  <RulerBar key={b}>{b}</RulerBar>
                ))}
              </RulerBars>
              {flags.map(([label, x]) => (
                <Flag key={label} style={{ left: x }}>{label}</Flag>
              ))}
            </Ruler>
            <Lanes>
              <Lane>
                {drumParts.map((p) => (
                  <DrumPart key={p.x} p={p} />
                ))}
              </Lane>
              <Lane>
                {wobParts.map((p, i) => (
                  <BlockPart
                    key={p.x}
                    p={p}
                    blocks={wobBlocks}
                    c1={15}
                    c2={49}
                    fade={i === 0 ? "M34 17L39 67" : i === 1 ? "M25 17L27 67" : i === 4 ? "M23 15H32L40 67" : undefined}
                  />
                ))}
              </Lane>
              <Lane>
                {frizParts.map((p, i) => (
                  <BlockPart
                    key={p.x}
                    p={p}
                    blocks={frizBlocks}
                    c1={17}
                    c2={51}
                    fade={i === 1 ? "M0 17H74L82 67" : undefined}
                  />
                ))}
              </Lane>
              <Lane>
                {midiParts.map((p) => (
                  <MidiPart key={p.x} p={p} />
                ))}
              </Lane>
              <Lane>
                {keyParts.map((p, i) => (
                  <KeyPart key={p.x} p={p} i={i} />
                ))}
              </Lane>
              <Overlay width="712" height="345" viewBox="0 0 712 345">
                <polyline
                  points={[[0, 40], ...cyanPts, [712, 40]].map((q) => q.join(",")).join(" ")}
                  fill="none"
                  stroke="#2cc0d2"
                  strokeWidth="1.300"
                />
                {cyanPts.map(([x, y]) => (
                  <Node key={x} x={x} y={y} />
                ))}
                <path d="M425 88H530" stroke="#e6e6a0" strokeWidth="6" opacity="0.25" />
                <polyline
                  points={[[0, 88], ...yellowPts, [712, 88]].map((q) => q.join(",")).join(" ")}
                  fill="none"
                  stroke="#d6cf55"
                  strokeWidth="1.300"
                />
                {yellowPts.map(([x, y]) => (
                  <Node key={x} x={x} y={y} />
                ))}
              </Overlay>
            </Lanes>
            <ScrollRow>
              <ScrollThumb>00:00:46:10</ScrollThumb>
              <ScrollEnd>
                <Plus size={7} strokeWidth={3} />
                <Minus size={7} strokeWidth={3} />
              </ScrollEnd>
            </ScrollRow>
            <PosRow>
              <PosCell $w={48}><span>Pos</span><span>001:01:000</span></PosCell>
              <PosCell $w={50} $pad={5}><span>Len</span><span>004:01:328</span></PosCell>
              <PosCell $w={51} $pad={5}><span>End</span><span>016:03:024</span></PosCell>
              <PosIcons>
                <ArrowLeftRight size={8} strokeWidth={2.4} />
                <ArrowUpDown size={8} strokeWidth={2.4} />
              </PosIcons>
            </PosRow>
          </Timeline>
          <VScroll>
            <VCap />
            <VThumb />
            <VButtons>
              <Plus size={7} strokeWidth={3} />
              <Minus size={7} strokeWidth={3} />
            </VButtons>
          </VScroll>
        </Center>

        <MeterPanel>
          <MeterCap><X size={4} strokeWidth={3} /></MeterCap>
          <Meter />
        </MeterPanel>
      </Workspace>

      <Strip />
      <TabBar>
        {tabs.map(([t, w]) => (
          <BottomTab key={t} $w={w}>{t}</BottomTab>
        ))}
        <BottomTab $w={53} $active>
          Objekteditor
          <X size={6} strokeWidth={2.5} />
        </BottomTab>
        <BottomTab $w={37}>Zeitanzeige</BottomTab>
        <TabAdd><Plus size={7} strokeWidth={3} /></TabAdd>
      </TabBar>
      <Footer>
        <FooterSlot $w={57} />
        <FooterSlot $w={52} />
      </Footer>
    </Frame>
  );
}
